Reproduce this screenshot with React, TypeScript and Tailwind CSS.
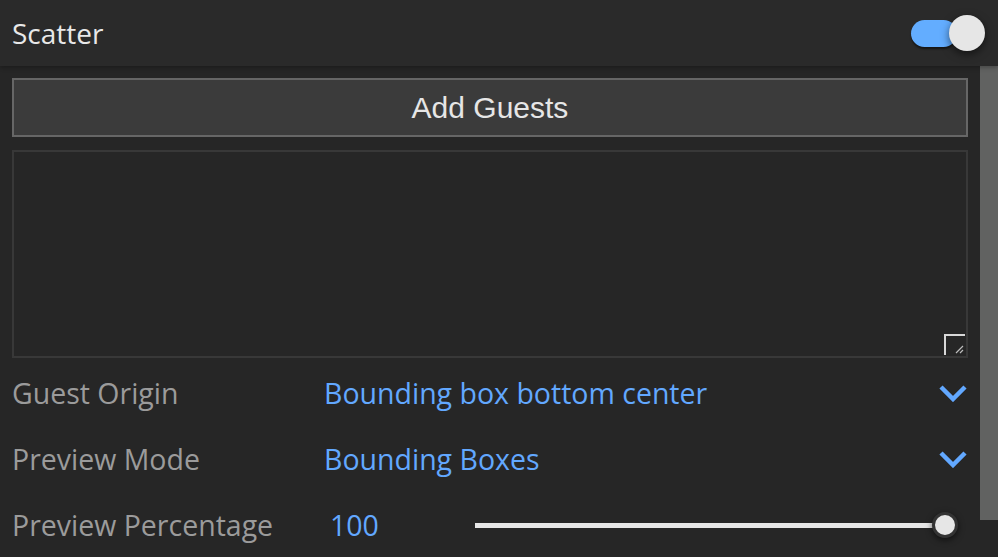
const rows = [
  { label: "Guest Origin", value: "Bounding box bottom center" },
  { label: "Preview Mode", value: "Bounding Boxes" },
];

const font = { fontFamily: '"Open Sans", "Noto Sans", sans-serif' };

function Chevron() {
  return (
    <svg width="28" height="18" viewBox="0 0 28 18" className="shrink-0 mr-[1px]">
      <polyline points="2,3 14,15 26,3" fill="none" stroke="#62a8ff" strokeWidth="4.5" strokeLinejoin="miter" />
    </svg>
  );
}

export default function App() {
  return (
    <div className="w-[998px] h-[557px] bg-[#262626] overflow-hidden flex flex-col" style={font}>
      {/* Header */}
      <div className="h-[66px] shrink-0 bg-[#2a2a2a] flex items-center justify-between pl-3 pr-[13px] shadow-[0_2px_4px_rgba(0,0,0,0.25)] relative z-10">
        <span className="text-[28px] text-[#e8e8e8] leading-none">Scatter</span>
        <div className="relative w-[74px] h-[36px] flex items-center">
          <div className="absolute left-0 w-[46px] h-[27px] rounded-full bg-[#63adff] shadow-[0_2px_2px_rgba(0,0,0,0.5)]" />
          <div className="absolute right-0 w-[36px] h-[36px] rounded-full bg-[#e6e6e6] shadow-[0_3px_8px_rgba(0,0,0,0.55)]" />
        </div>
      </div>

      <div className="flex flex-1">
        <div className="flex-1 pl-3 pr-3 pt-3">
          <button
            className="w-full h-[59px] bg-[#3b3b3b] border-2 border-[#666666] text-[#e6e6e6] text-[30px] flex items-center justify-center"
            style={{ fontFamily: '"Liberation Sans", Arial, sans-serif' }}
          >
            Add Guests
          </button>

          <div className="mt-[13px] h-[208px] border-2 border-[#383838] bg-[#262626] relative">
            <svg width="21" height="21" viewBox="0 0 21 21" className="absolute right-[1px] bottom-[1px]">
              <path d="M1 21 V1 H21" fill="none" stroke="#d8d8d8" strokeWidth="2" />
              <path d="M12 19 L19 12 M16 19 L19 16" fill="none" stroke="#bdbdbd" strokeWidth="1.2" />
            </svg>
          </div>

          <div className="mt-[2px]">
            {rows.map((r) => (
              <div key={r.label} className="h-[66px] flex items-center">
                <span className="w-[312px] text-[28.5px] text-[#9b9b9b]">{r.label}</span>
                <span className="flex-1 text-[28.5px] text-[#62a8ff]">{r.value}</span>
                <Chevron />
              </div>
            ))}
            <div className="h-[66px] flex items-center">
              <span className="w-[318px] text-[28.5px] text-[#9b9b9b]">Preview Percentage</span>
              <span className="w-[145px] text-[28.5px] text-[#62a8ff]">100</span>
              <div className="flex-1 relative h-[26px] flex items-center">
                <div className="h-[5px] w-[calc(100%-22px)] bg-[#e6e6e6]" />
                <div className="absolute right-[10px] top-0 w-[26px] h-[26px] rounded-full bg-[#e6e6e6] border-[3px] border-[#333333] shadow-[0_2px_6px_rgba(0,0,0,0.6)]" />
              </div>
            </div>
          </div>
        </div>
        <div className="w-[18px] h-[454px] bg-[#616261] shrink-0" />
      </div>
    </div>
  );
}
